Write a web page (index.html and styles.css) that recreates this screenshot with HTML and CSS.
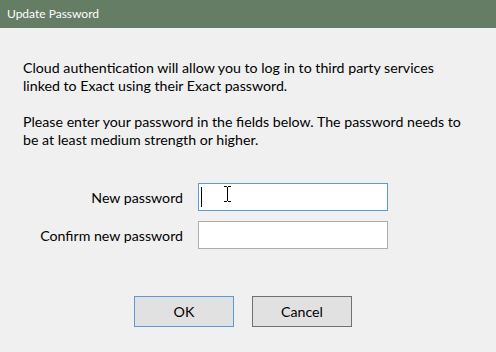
FILE: index.html
```html
<!DOCTYPE html>
<html>
<head>
<meta charset="utf-8">
<link rel="stylesheet" href="styles.css">
</head>
<body>
<div class="dialog">
  <div class="titlebar">Update Password</div>
  <div class="content">
    <p class="para">Cloud authentication will allow you to log in to third party services<br>linked to Exact using their Exact password.</p>
    <p class="para">Please enter your password in the fields below. The password needs to<br>be at least medium strength or higher.</p>
    <div class="form">
      <div class="row">
        <label class="label">New password</label>
        <div class="input focused"><span class="caret"></span>
          <svg class="ibeam" width="9" height="16" viewBox="0 0 9 16"><path d="M1 0.5h3M5 0.5h3M4.5 1v14M1 15.5h3M5 15.5h3" stroke="#000" stroke-width="1" fill="none"/></svg>
        </div>
      </div>
      <div class="row">
        <label class="label">Confirm new password</label>
        <div class="input"></div>
      </div>
    </div>
    <div class="buttons">
      <button class="btn default">OK</button>
      <button class="btn">Cancel</button>
    </div>
  </div>
</div>
</body>
</html>
```
FILE: styles.css
```css
html, body {
  margin: 0;
  padding: 0;
}
body {
  width: 496px;
  height: 352px;
  background: #f0f0f0;
  font-family: "Lato", "Noto Sans", sans-serif;
  color: #000;
  overflow: hidden;
}
.titlebar {
  height: 28px;
  background: #657d64;
  color: #fff;
  font-size: 12px;
  line-height: 28px;
  padding-left: 7px;
  box-sizing: border-box;
}
.content {
  padding: 31px 0 0 23px;
}
.para {
  margin: 0 0 18px 0;
  font-size: 14.2px;
  line-height: 18px;
}
.form {
  display: flex;
  flex-direction: column;
  gap: 10px;
  margin-top: 34px;
}
.row {
  display: flex;
  align-items: center;
}
.label {
  width: 160px;
  text-align: right;
  font-size: 14.2px;
  margin-right: 15px;
}
.input {
  position: relative;
  width: 190px;
  height: 28px;
  box-sizing: border-box;
  background: #fff;
  border: 1px solid #adadad;
}
.input.focused {
  border-color: #5b9bd5;
}
.caret {
  position: absolute;
  left: 2px;
  top: 3px;
  width: 1px;
  height: 20px;
  background: #000;
}
.ibeam {
  position: absolute;
  left: 24px;
  top: 2px;
}
.buttons {
  display: flex;
  gap: 18px;
  margin: 47px 0 0 111px;
}
.btn {
  width: 100px;
  height: 31px;
  box-sizing: border-box;
  background: #e1e1e1;
  border: 1px solid #707070;
  font-family: inherit;
  font-size: 14.2px;
  color: #000;
  padding: 0;
}
.btn.default {
  border-color: #5b9bd5;
}
```
